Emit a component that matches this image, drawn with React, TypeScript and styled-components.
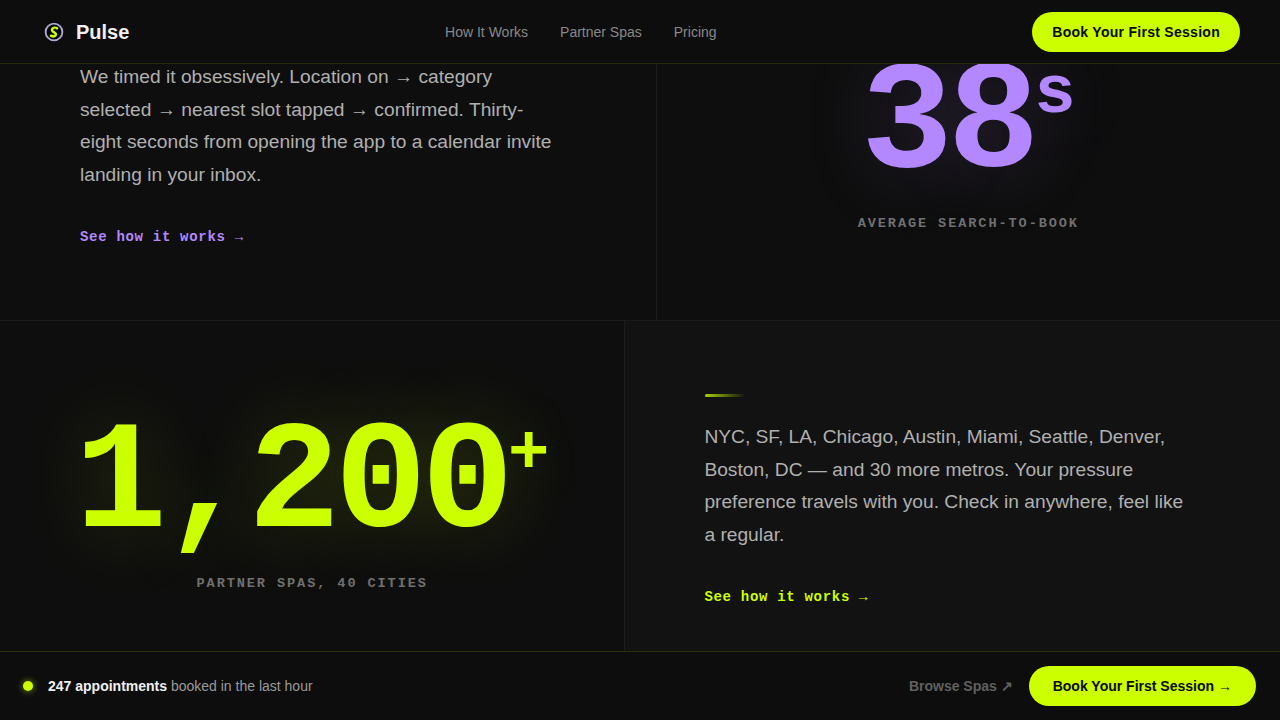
import React from 'react';
import styled, { createGlobalStyle } from 'styled-components';

const lime = '#ccff00';
const violet = '#b388ff';

const GlobalStyle = createGlobalStyle`
    html, body {
        margin: 0;
        height: 100%;
        overflow: hidden;
        background: #0e0e0e;
    }

    * {
        box-sizing: border-box;
    }
`;

const Nav = styled.nav`
    position: fixed;
    top: 0;
    left: 0;
    right: 0;
    z-index: 10;
    height: 64px;
    padding: 0 40px;
    display: flex;
    justify-content: space-between;
    align-items: center;
    background: #0d0d0d;
    border-bottom: 1px solid rgba(204, 255, 0, 0.12);
    font-family: 'Liberation Sans', Arial, sans-serif;
`;

const Brand = styled.div`
    display: flex;
    align-items: center;
    gap: 8px;
    font-size: 20px;
    font-weight: 700;
    color: #f0f0f0;
`;

const BrandName = styled.span`
    margin-top: 2px;
`;

const NavLinks = styled.div`
    display: flex;
    gap: 32px;
`;

const NavLink = styled.a`
    font-size: 14px;
    color: #888888;
`;

const Pill = styled.a`
    display: inline-flex;
    align-items: center;
    height: 40px;
    border-radius: 20px;
    background: ${lime};
    color: #0a0a0a;
    font-size: 14px;
    font-weight: 700;
    white-space: nowrap;
`;

const NavPill = styled(Pill)`
    padding: 0 20px;
    letter-spacing: 0.28px;
`;

const Page = styled.main`
    margin-top: -40px;
    font-family: 'Liberation Sans', Arial, sans-serif;
`;

const Row = styled.section<{ $columns: string }>`
    display: grid;
    grid-template-columns: ${(props) => props.$columns};
    border-bottom: 1px solid #1c1c1c;
`;

const FirstRow = styled(Row)`
    height: 361px;
`;

const SecondRow = styled(Row)`
    height: 359px;
`;

const TextCell = styled.div<{ $divided?: boolean; $raised?: boolean }>`
    padding: 72px 80px 73.5px ${(props) => (props.$divided ? '79px' : '80px')};
    display: flex;
    flex-direction: column;
    justify-content: center;
    align-items: flex-start;
    background: ${(props) => (props.$raised ? '#121212' : '#0e0e0e')};
    border-left: ${(props) => (props.$divided ? '1px solid #1c1c1c' : 'none')};
`;

const Rule = styled.div`
    width: 40px;
    height: 3px;
    margin: 0 0 24px 0.2px;
    border-radius: 2px;
    background: linear-gradient(90deg, ${lime}, transparent);
    opacity: 0.8;
`;

const Body = styled.p`
    margin: 0 0 37px;
    max-width: 480px;
    font-size: 19.2px;
    line-height: 1.7;
    color: #b0b0b0;
`;

const More = styled.a<{ $color: string }>`
    font-family: 'Liberation Mono', 'Courier New', monospace;
    font-size: 14px;
    font-weight: 700;
    letter-spacing: 0.7px;
    color: ${(props) => props.$color};
`;

const StatCell = styled.div<{ $divided?: boolean }>`
    display: flex;
    flex-direction: column;
    align-items: center;
    justify-content: center;
    background: #0e0e0e;
    border-left: ${(props) => (props.$divided ? '1px solid #1c1c1c' : 'none')};
`;

const Figure = styled.div<{ $color: string; $glow: string }>`
    display: flex;
    align-items: flex-start;
    font-family: 'Liberation Mono', 'Courier New', monospace;
    font-size: 153.6px;
    font-weight: 700;
    line-height: 1;
    letter-spacing: -0.036em;
    color: ${(props) => props.$color};
    text-shadow: 0 0 80px ${(props) => props.$glow};
`;

const Suffix = styled.span`
    font-size: 0.45em;
    line-height: 1.3;
    letter-spacing: 0;
`;

const StatLabel = styled.div`
    margin-top: 13px;
    font-family: 'Liberation Mono', 'Courier New', monospace;
    font-size: 13.6px;
    font-weight: 700;
    letter-spacing: 1.9px;
    text-transform: uppercase;
    color: #707070;
`;

const BottomBar = styled.footer`
    position: fixed;
    left: 0;
    right: 0;
    bottom: 0;
    z-index: 10;
    height: 69px;
    padding: 0 24px;
    display: flex;
    align-items: center;
    justify-content: space-between;
    background: #0d0d0d;
    border-top: 1px solid rgba(204, 255, 0, 0.15);
    font-family: 'Liberation Sans', Arial, sans-serif;
`;

const Live = styled.div`
    display: flex;
    align-items: center;
    gap: 16px;
    font-size: 14px;
    color: #999999;

    strong {
        color: #f0f0f0;
    }
`;

const Dot = styled.span`
    width: 8px;
    height: 8px;
    border-radius: 50%;
    background: ${lime};
    box-shadow: 0 0 6px rgba(204, 255, 0, 0.6);
    transform: scale(1.25);
`;

const Actions = styled.div`
    display: flex;
    align-items: center;
    gap: 16px;
`;

const Browse = styled.a`
    font-size: 14px;
    font-weight: 700;
    color: #606060;
`;

const BarPill = styled(Pill)`
    padding: 0 24px;
    gap: 4px;
`;

const Logo = () => (
    <svg width="28" height="28" viewBox="0 0 28 28" fill="none">
        <circle cx="14" cy="14" r="10" fill="#05050a" />
        <circle cx="14" cy="14" r="8.4" stroke="#b0a8d0" strokeWidth="1.9" />
        <path d="M17 10.2C14 9 11 10.6 12.5 13C13.8 14.8 16.8 15 15.6 17.2C14.5 18.8 12.4 18.4 11 17.8" stroke={lime} strokeWidth="2.6" strokeLinecap="round" />
        <path d="M15.5 11C13.8 10.8 13 11.6 14 12.6" stroke="#20240a" strokeWidth="0.7" strokeLinecap="round" />
    </svg>
);

const App = () => (
    <>
        <GlobalStyle />
        <Nav>
            <Brand>
                <Logo />
                <BrandName>Pulse</BrandName>
            </Brand>
            <NavLinks>
                <NavLink>How It Works</NavLink>
                <NavLink>Partner Spas</NavLink>
                <NavLink>Pricing</NavLink>
            </NavLinks>
            <NavPill>Book Your First Session</NavPill>
        </Nav>

        <Page>
            <FirstRow $columns="1.05fr 1fr">
                <TextCell>
                    <Rule />
                    <Body>
                        We timed it obsessively. Location on → category selected → nearest slot tapped → confirmed.
                        Thirty-eight seconds from opening the app to a calendar invite landing in your inbox.
                    </Body>
                    <More $color={violet}>See how it works →</More>
                </TextCell>
                <StatCell $divided>
                    <Figure $color={violet} $glow="rgba(179, 136, 255, 0.2)">
                        38<Suffix>s</Suffix>
                    </Figure>
                    <StatLabel>Average search-to-book</StatLabel>
                </StatCell>
            </FirstRow>

            <SecondRow $columns="1fr 1.05fr">
                <StatCell>
                    <Figure $color={lime} $glow="rgba(204, 255, 0, 0.2)">
                        1,200<Suffix>+</Suffix>
                    </Figure>
                    <StatLabel>Partner spas, 40 cities</StatLabel>
                </StatCell>
                <TextCell $divided $raised>
                    <Rule />
                    <Body>
                        NYC, SF, LA, Chicago, Austin, Miami, Seattle, Denver, Boston, DC — and 30 more metros. Your
                        pressure preference travels with you. Check in anywhere, feel like a regular.
                    </Body>
                    <More $color={lime}>See how it works →</More>
                </TextCell>
            </SecondRow>
        </Page>

        <BottomBar>
            <Live>
                <Dot />
                <span>
                    <strong>247 appointments</strong> booked in the last hour
                </span>
            </Live>
            <Actions>
                <Browse>Browse Spas ↗</Browse>
                <BarPill>
                    Book Your First Session <span>→</span>
                </BarPill>
            </Actions>
        </BottomBar>
    </>
);

export default App;
